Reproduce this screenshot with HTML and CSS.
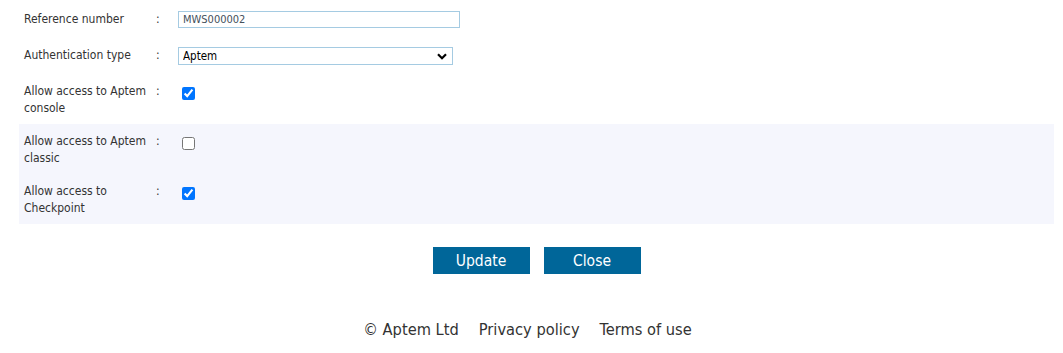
FILE: index.html
```html
<!DOCTYPE html>
<html lang="en">
<head>
<meta charset="utf-8">
<title>Learner settings</title>
<link rel="stylesheet" href="styles.css">
</head>
<body>
<div class="page">
  <form class="form">
    <div class="row">
      <label class="label" for="ref">Reference number</label>
      <span class="colon">:</span>
      <div class="control"><input id="ref" class="text-input" type="text" value="MWS000002"></div>
    </div>
    <div class="row">
      <label class="label" for="auth">Authentication type</label>
      <span class="colon">:</span>
      <div class="control">
        <div class="select-wrap">
          <select id="auth" class="select"><option>Aptem</option></select>
          <svg class="chev" width="10" height="7" viewBox="0 0 10 7"><path d="M1 1.2 L5 5.2 L9 1.2" fill="none" stroke="#000" stroke-width="2.2"/></svg>
        </div>
      </div>
    </div>
    <div class="row">
      <label class="label" for="c1">Allow access to Aptem console</label>
      <span class="colon">:</span>
      <div class="control"><input id="c1" class="check" type="checkbox" checked></div>
    </div>
    <div class="shaded">
      <div class="row">
        <label class="label" for="c2">Allow access to Aptem classic</label>
        <span class="colon">:</span>
        <div class="control"><input id="c2" class="check" type="checkbox"></div>
      </div>
      <div class="row">
        <label class="label" for="c3">Allow access to Checkpoint</label>
        <span class="colon">:</span>
        <div class="control"><input id="c3" class="check" type="checkbox" checked></div>
      </div>
    </div>
  </form>
  <div class="actions">
    <button class="btn" type="button">Update</button>
    <button class="btn" type="button">Close</button>
  </div>
  <footer class="footer">
    <span>© Aptem Ltd</span>
    <a href="#">Privacy policy</a>
    <a href="#">Terms of use</a>
  </footer>
</div>
</body>
</html>
```
FILE: styles.css
```css
html, body {
  margin: 0;
  padding: 0;
  background: #fff;
}
body {
  font-family: "DejaVu Sans Condensed", "DejaVu Sans", sans-serif;
  font-size: 12px;
  color: #333;
}
.page {
  padding: 2px 9px 0 19px;
}
.row {
  display: grid;
  grid-template-columns: 132px 22px 1fr;
  padding: 9px 0 7px 5px;
  line-height: 17px;
  min-height: 20px;
}
.label {
  color: #333;
}
.colon {
  color: #333;
}
.control {
  display: flex;
  align-items: flex-start;
}
.text-input {
  box-sizing: border-box;
  width: 282px;
  height: 17px;
  margin: 0;
  padding: 0 4px;
  border: 1px solid #a5cbe2;
  font-family: inherit;
  font-size: 11px;
  color: #44505c;
  outline: none;
}
.select-wrap {
  position: relative;
  margin-top: 0;
}
.select {
  appearance: none;
  -webkit-appearance: none;
  box-sizing: border-box;
  width: 275px;
  height: 18px;
  margin: 0;
  padding: 0 4px;
  border: 1px solid #a5cbe2;
  border-radius: 0;
  background: #fff;
  font-family: inherit;
  font-size: 11.5px;
  color: #000;
}
.chev {
  position: absolute;
  right: 6px;
  top: 6px;
  pointer-events: none;
}
.check {
  width: 13px;
  height: 13px;
  margin: 4px 0 0 4px;
}
.row:has(.check) {
  min-height: 34px;
}
.shaded {
  background: #f5f6fd;
}
.actions {
  display: flex;
  justify-content: center;
  gap: 14px;
  margin-top: 23px;
}
.btn {
  width: 97px;
  height: 27px;
  border: 0;
  border-radius: 0;
  background: #006699;
  color: #fff;
  font-family: "DejaVu Sans Condensed", "DejaVu Sans", sans-serif;
  font-size: 15.5px;
  padding: 0;
}
.footer {
  display: flex;
  justify-content: center;
  gap: 20px;
  margin-top: 46px;
  font-size: 16.3px;
  color: #333;
  padding-right: 18px;
}
.footer a {
  color: #333;
  text-decoration: none;
}
```
